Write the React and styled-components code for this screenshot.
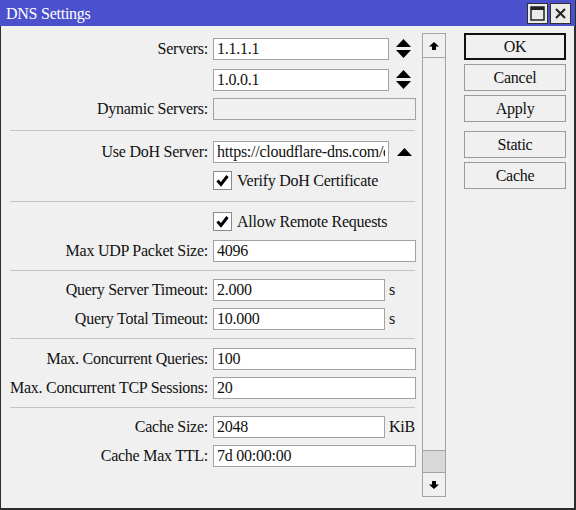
import React from 'react';
import styled, { createGlobalStyle } from 'styled-components';

const GlobalStyle = createGlobalStyle`
  html, body {
    margin: 0;
    padding: 0;
    background: #f0f0f0;
  }
  body {
    font-family: "Liberation Serif", "Times New Roman", serif;
    font-size: 16px;
    letter-spacing: -0.25px;
    color: #111;
  }
`;

const Window = styled.div`
  width: 576px;
  height: 510px;
  display: flex;
  flex-direction: column;
  box-sizing: border-box;
  overflow: hidden;
`;

const TitleBar = styled.div`
  height: 26px;
  flex-shrink: 0;
  background: #4b50cc;
  display: flex;
  align-items: center;
  padding: 0 4px 0 6px;
  border-right: 1px solid #2c2c2c;
`;

const Title = styled.div`
  flex: 1;
  color: #fff;
  font-size: 16px;
  padding-top: 1px;
`;

const TitleButton = styled.div`
  width: 19px;
  height: 19px;
  margin-left: 2px;
  background: #ecebeb;
  border: 1px solid #303030;
  display: flex;
  align-items: center;
  justify-content: center;
`;

const Body = styled.div`
  flex: 1;
  display: flex;
  background: #f0f0f0;
  border-left: 1px solid #2c2c2c;
  border-right: 2px solid #2c2c2c;
  border-bottom: 2px solid #2c2c2c;
`;

const Form = styled.div`
  width: 414px;
  flex-shrink: 0;
  padding-top: 8px;
`;

const Row = styled.div`
  display: flex;
  align-items: center;
  height: 29px;
  margin-top: ${p => p.$mt || 0}px;
`;

const Label = styled.div`
  width: 207px;
  flex-shrink: 0;
  margin-right: 5px;
  text-align: right;
  white-space: nowrap;
`;

const Field = styled.input`
  box-sizing: border-box;
  flex-shrink: 0;
  width: ${p => p.$w || 203}px;
  height: 22px;
  padding: 0 3px;
  margin: 0;
  border: 1px solid #a3a3a3;
  border-radius: 0;
  background: ${p => (p.$disabled ? '#f0f0f0' : '#fff')};
  font-family: "Liberation Serif", "Times New Roman", serif;
  font-size: 16px;
  letter-spacing: -0.25px;
  color: #111;
  outline: none;
`;

const Unit = styled.span`
  margin-left: 4px;
`;

const Arrows = styled.div`
  margin-left: ${p => p.$ml || 6}px;
  display: flex;
  align-items: center;
`;

const Check = styled.div`
  box-sizing: border-box;
  width: 19px;
  height: 19px;
  border: 1px solid #8a8a8a;
  background: #fff;
  display: flex;
  align-items: center;
  justify-content: center;
  margin-right: 5px;
`;

const Separator = styled.div`
  height: ${p => p.$h}px;
  display: flex;
  align-items: center;
  padding-left: 9px;

  &::after {
    content: '';
    display: block;
    width: 405px;
    height: 1px;
    background: #c4c4c4;
  }
`;

const ScrollBar = styled.div`
  box-sizing: border-box;
  width: 24px;
  height: 464px;
  margin: 7px 0 0 7px;
  border: 1px solid #a3a3a3;
  display: flex;
  flex-direction: column;
`;

const ScrollButton = styled.div`
  height: 23px;
  display: flex;
  align-items: center;
  justify-content: center;
  border-${p => (p.$down ? 'top' : 'bottom')}: 1px solid #a3a3a3;
`;

const Track = styled.div`
  flex: 1;
  display: flex;
  flex-direction: column;
  justify-content: flex-end;
`;

const Thumb = styled.div`
  height: 21px;
  background: #d9d9d9;
  border-top: 1px solid #a3a3a3;
`;

const Buttons = styled.div`
  width: 102px;
  margin: 7px 0 0 18px;
  display: flex;
  flex-direction: column;
`;

const Button = styled.div`
  box-sizing: border-box;
  height: 27px;
  margin-top: ${p => p.$mt || 0}px;
  border: ${p => (p.$primary ? '1px solid #111' : '1px solid #9a9a9a')};
  box-shadow: ${p => (p.$primary ? 'inset 0 0 0 1px #111' : 'none')};
  background: #f0f0f0;
  display: flex;
  align-items: center;
  justify-content: center;
  font-size: 16px;
`;

const UpDown = () => (
  <svg width="17" height="22" viewBox="0 0 17 22">
    <polygon points="8.5,1 16,9 1,9" fill="#000" />
    <polygon points="1,12 16,12 8.5,20" fill="#000" />
  </svg>
);

const UpOnly = () => (
  <svg width="15" height="8" viewBox="0 0 15 8">
    <polygon points="7.5,0 15,8 0,8" fill="#000" />
  </svg>
);

const Tick = () => (
  <svg width="13" height="13" viewBox="0 0 13 13">
    <path d="M1.5 6.5 L5 10.5 L11.5 2" fill="none" stroke="#000" strokeWidth="3" />
  </svg>
);

const ScrollArrow = ({ down }) => (
  <svg width="10" height="8" viewBox="0 0 10 8" style={down ? { transform: 'rotate(180deg)' } : null}>
    <polygon points="5,0 10,4.5 7,4.5 7,8 3,8 3,4.5 0,4.5" fill="#000" />
  </svg>
);

const FormRow = ({ label, value, width, unit, disabled, mt, children }) => (
  <Row $mt={mt}>
    <Label>{label}</Label>
    <Field readOnly defaultValue={value} $w={width} $disabled={disabled} />
    {unit && <Unit>{unit}</Unit>}
    {children}
  </Row>
);

const CheckRow = ({ text }) => (
  <Row>
    <Label />
    <Check><Tick /></Check>
    <span>{text}</span>
  </Row>
);

export default function App() {
  return (
    <>
      <GlobalStyle />
      <Window>
        <TitleBar>
          <Title>DNS Settings</Title>
          <TitleButton>
            <svg width="15" height="15" viewBox="0 0 15 15">
              <rect x="1" y="1" width="13" height="13" fill="none" stroke="#222" strokeWidth="1.5" />
              <rect x="1" y="1" width="13" height="3" fill="#222" />
            </svg>
          </TitleButton>
          <TitleButton>
            <svg width="13" height="13" viewBox="0 0 13 13">
              <path d="M2 2 L11 11 M11 2 L2 11" stroke="#222" strokeWidth="2" />
            </svg>
          </TitleButton>
        </TitleBar>
        <Body>
          <Form>
            <FormRow label="Servers:" value="1.1.1.1" width={176}>
              <Arrows><UpDown /></Arrows>
            </FormRow>
            <FormRow label="" value="1.0.0.1" width={176} mt={2}>
              <Arrows><UpDown /></Arrows>
            </FormRow>
            <FormRow label="Dynamic Servers:" value="" disabled />
            <Separator $h={14} />
            <FormRow label="Use DoH Server:" value="https://cloudflare-dns.com/dns-query" width={176}>
              <Arrows $ml={8}><UpOnly /></Arrows>
            </FormRow>
            <CheckRow text="Verify DoH Certificate" />
            <Separator $h={12} />
            <CheckRow text="Allow Remote Requests" />
            <FormRow label="Max UDP Packet Size:" value="4096" />
            <Separator $h={10} />
            <FormRow label="Query Server Timeout:" value="2.000" width={172} unit="s" />
            <FormRow label="Query Total Timeout:" value="10.000" width={172} unit="s" />
            <Separator $h={11} />
            <FormRow label="Max. Concurrent Queries:" value="100" />
            <FormRow label="Max. Concurrent TCP Sessions:" value="20" />
            <Separator $h={10} />
            <FormRow label="Cache Size:" value="2048" width={172} unit="KiB" />
            <FormRow label="Cache Max TTL:" value="7d 00:00:00" />
          </Form>
          <ScrollBar>
            <ScrollButton><ScrollArrow /></ScrollButton>
            <Track><Thumb /></Track>
            <ScrollButton $down><ScrollArrow down /></ScrollButton>
          </ScrollBar>
          <Buttons>
            <Button $primary>OK</Button>
            <Button $mt={4}>Cancel</Button>
            <Button $mt={4}>Apply</Button>
            <Button $mt={9}>Static</Button>
            <Button $mt={4}>Cache</Button>
          </Buttons>
        </Body>
      </Window>
    </>
  );
}
